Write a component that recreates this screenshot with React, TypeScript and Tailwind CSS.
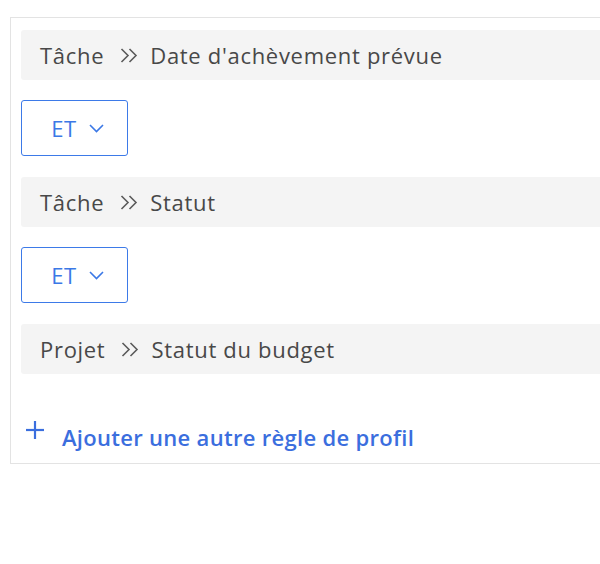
const rules = [
  { parent: "Tâche", field: "Date d'achèvement prévue" },
  { parent: "Tâche", field: "Statut" },
  { parent: "Projet", field: "Statut du budget" },
]

function DoubleChevron() {
  return (
    <svg width="18" height="15" viewBox="0 0 18 15" fill="none" stroke="#5a5a5a" strokeWidth="1.6" className="ml-[16px] mr-[12px]">
      <polyline points="1.5,1 8,7.5 1.5,14" />
      <polyline points="9.5,1 16,7.5 9.5,14" />
    </svg>
  )
}

function RuleRow({ parent, field }: { parent: string; field: string }) {
  return (
    <div className="flex h-[50px] items-center rounded-[3px] bg-[#f4f4f4] pl-[19px] text-[22px] tracking-[0.7px] text-[#484848]">
      <span>{parent}</span>
      <DoubleChevron />
      <span>{field}</span>
    </div>
  )
}

function AndButton() {
  return (
    <button className="-mt-[1px] flex h-[56px] w-[107px] items-center justify-center gap-[12px] rounded-[3px] border-[1.5px] border-[#3d7ae8] bg-white pl-[6px] text-[22px] tracking-[0.7px] text-[#3b78e6]">
      <span>ET</span>
      <svg width="15" height="9" viewBox="0 0 15 9" fill="none" stroke="#3b78e6" strokeWidth="1.6">
        <polyline points="1,1 7.5,7.5 14,1" />
      </svg>
    </button>
  )
}

export default function App() {
  return (
    <div className="h-[564px] w-[600px] overflow-hidden bg-white pt-[17px] pl-[10px] font-['Open_Sans',sans-serif]">
      <div className="w-[640px] border border-[#e3e3e3] pt-[12px] pl-[10px] pb-[9px]">
        <div className="flex flex-col gap-[21px]">
          {rules.map((r, i) => (
            <div key={i} className="flex flex-col gap-[21px]">
              <RuleRow parent={r.parent} field={r.field} />
              {i < rules.length - 1 && <AndButton />}
            </div>
          ))}
        </div>
        <div className="mt-[47px] flex items-center gap-[17px] pl-[4px] text-[22px] font-semibold tracking-[0.3px] text-[#3b6ede]">
          <svg width="20" height="20" viewBox="0 0 20 20" fill="none" stroke="#3b6ede" strokeWidth="2.2" className="-translate-y-[8px]">
            <line x1="10" y1="1" x2="10" y2="19" />
            <line x1="1" y1="10" x2="19" y2="10" />
          </svg>
          <span>Ajouter une autre règle de profil</span>
        </div>
      </div>
    </div>
  )
}
